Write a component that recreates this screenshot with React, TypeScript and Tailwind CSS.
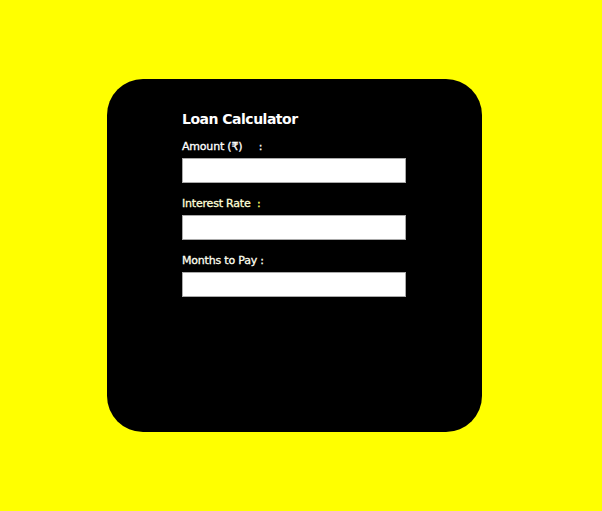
import React from "react";

export default function App() {
  return (
    <div className="w-[602px] h-[511px] bg-[#ffff00] flex items-center" style={{ fontFamily: '"DejaVu Sans", sans-serif' }}>
      <div className="ml-[107px] w-[375px] h-[353px] bg-black rounded-[36px] pl-[75px] pt-[30px]">
        <h1 className="text-white font-bold text-[14px] tracking-[-0.5px] leading-[20px] mb-[11px]">Loan Calculator</h1>
        <div className="flex flex-col">
          <label className="text-white text-[11px] tracking-[-0.2px] leading-[13px] mb-[5px] whitespace-pre [-webkit-text-stroke:0.3px_currentColor]">{"Amount (₹)     :"}</label>
          <input className="w-[224px] h-[25px] bg-white border border-[#aaaaaa] mb-[14px]" />
          <label className="text-[#ffffd8] text-[11px] tracking-[-0.2px] leading-[13px] mb-[5px] whitespace-pre [-webkit-text-stroke:0.3px_currentColor]">Interest Rate  <span className="text-[#ffff66]">:</span></label>
          <input className="w-[224px] h-[25px] bg-white border border-[#aaaaaa] mb-[14px]" />
          <label className="text-[#fffff0] text-[11px] tracking-[-0.2px] leading-[13px] mb-[5px] whitespace-pre [-webkit-text-stroke:0.3px_currentColor]">Months to Pay :</label>
          <input className="w-[224px] h-[25px] bg-white border border-[#aaaaaa]" />
        </div>
      </div>
    </div>
  );
}
